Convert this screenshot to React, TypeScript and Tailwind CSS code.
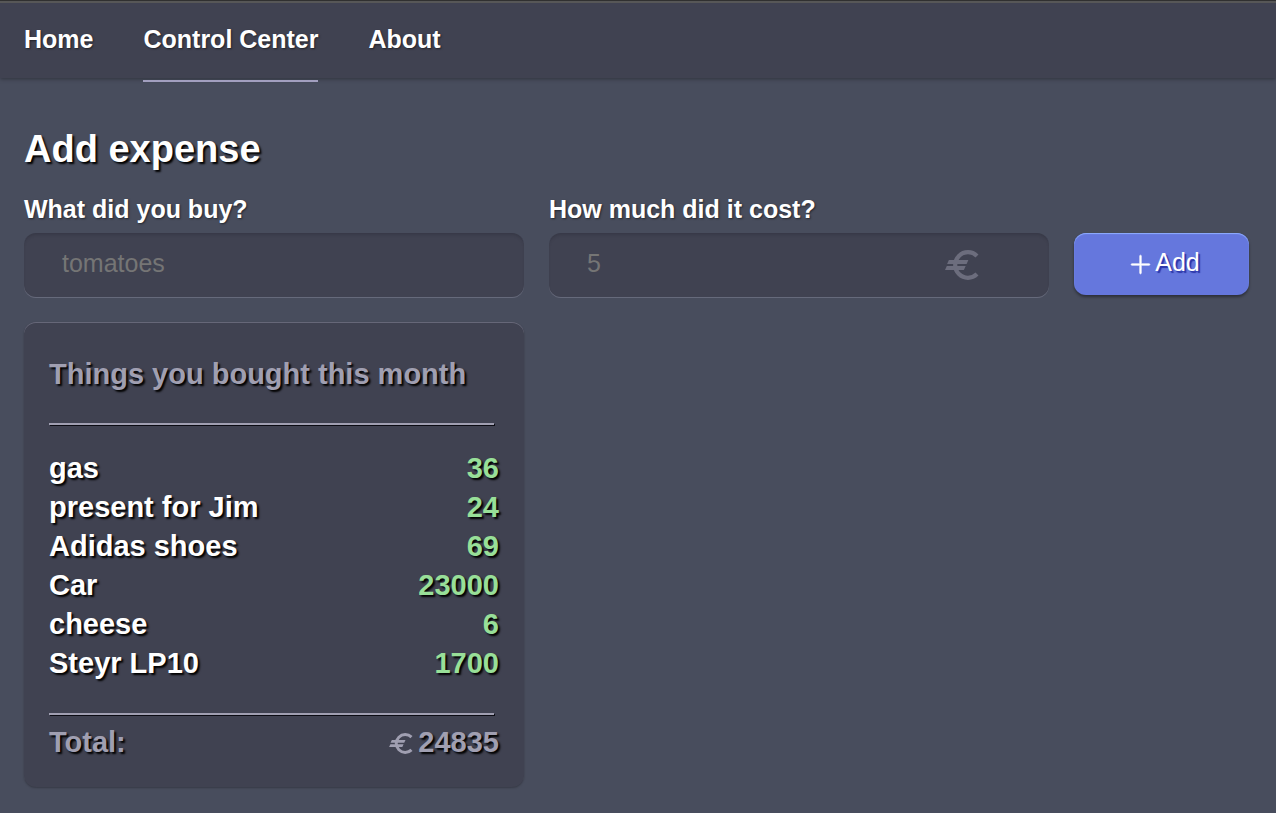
import { useState } from "react";
import { BsPlusLg } from "react-icons/bs";

type Expense = { name: string; cost: number };

const initialExpenses: Expense[] = [
  { name: "gas", cost: 36 },
  { name: "present for Jim", cost: 24 },
  { name: "Adidas shoes", cost: 69 },
  { name: "Car", cost: 23000 },
  { name: "cheese", cost: 6 },
  { name: "Steyr LP10", cost: 1700 },
];

const links = [
  { label: "Home", active: false },
  { label: "Control Center", active: true },
  { label: "About", active: false },
];

function EuroIcon({ className }: { className: string }) {
  return (
    <svg viewBox="0 0 34 30" className={className} aria-hidden="true">
      <path d="M32 5.9A12.8 12.8 0 1 0 32 24.1" fill="none" stroke="currentColor" strokeWidth="4.2" />
      <path d="M3.9 10H23.4L21.6 14H2.1ZM1.8 16H20.7L18.9 20H0Z" fill="currentColor" />
    </svg>
  );
}

const inputClass =
  "h-16 w-full min-w-0 rounded-xl bg-[#404251] px-[38px] pb-[3px] text-[25px] text-white placeholder:text-[#757575] shadow-[inset_0_3px_3px_-1px_rgba(30,30,45,0.25),0_1px_0_rgba(160,160,180,0.35)] focus:outline-none";

const labelClass =
  "mb-2 block text-[25px] leading-8 font-bold [text-shadow:1px_1px_2px_rgba(0,0,0,0.5)]";

function Divider() {
  return (
    <hr className="mr-[5px] border-0 border-t-2 border-[#a09fb1] shadow-[1px_1px_0_#0c0c14]" />
  );
}

export default function App() {
  const [expenses, setExpenses] = useState(initialExpenses);
  const [name, setName] = useState("");
  const [cost, setCost] = useState("");
  const total = expenses.reduce((sum, item) => sum + item.cost, 0);

  const add = () => {
    if (!name || !Number(cost)) return;
    setExpenses([...expenses, { name, cost: Number(cost) }]);
    setName("");
    setCost("");
  };

  return (
    <div className="min-h-screen bg-[#484d5d] font-['Liberation_Sans',Arial,sans-serif] text-white">
      <header className="border-t border-[#303030] bg-[#404251] shadow-[0_1px_4px_rgba(0,0,0,0.35)]">
        <nav className="flex h-[77px] gap-[50px] border-t-2 border-[#575757] px-6">
          {links.map((link) => (
            <a
              key={link.label}
              href="#"
              className={`h-[79px] shrink-0 pt-5 text-[25px] leading-8 font-bold [text-shadow:1px_1px_2px_rgba(0,0,0,0.5)] ${
                link.active ? "border-b-2 border-[#a29fbf]" : ""
              }`}
            >
              {link.label}
            </a>
          ))}
        </nav>
      </header>

      <main className="pt-[50px] pr-[27px] pb-[25px] pl-6">
        <h1 className="text-[38px] leading-[42px] font-bold [text-shadow:2px_2px_2px_#000000]">
          Add expense
        </h1>

        <form
          className="mt-[23px] grid grid-cols-[20fr_20fr_7fr] items-end gap-[25px]"
          onSubmit={(event) => {
            event.preventDefault();
            add();
          }}
        >
          <div>
            <label htmlFor="item" className={labelClass}>
              What did you buy?
            </label>
            <input
              id="item"
              placeholder="tomatoes"
              value={name}
              onChange={(event) => setName(event.target.value)}
              className={inputClass}
            />
          </div>
          <div>
            <label htmlFor="cost" className={labelClass}>
              How much did it cost?
            </label>
            <div className="relative">
              <input
                id="cost"
                inputMode="decimal"
                placeholder="5"
                value={cost}
                onChange={(event) => setCost(event.target.value)}
                className={inputClass}
              />
              <EuroIcon className="pointer-events-none absolute top-[17px] right-[70px] h-[30px] w-[34px] text-[#6c6d7d]" />
            </div>
          </div>
          <button
            type="submit"
            className="mb-0.5 flex h-[62px] items-center justify-center gap-0.5 rounded-xl bg-[#6577dd] pb-0.5 pl-[5px] text-[25px] shadow-[inset_0_1px_1px_#8fadff,0_2px_3px_rgba(0,0,0,0.4)] [text-shadow:2px_2px_1px_#2a35a8]"
          >
            <BsPlusLg className="mt-0.5 shrink-0" strokeWidth={0.4} aria-hidden="true" />
            Add
          </button>
        </form>

        <div className="mt-[25px] grid grid-cols-[20fr_20fr_7fr] gap-[25px]">
          <section className="rounded-xl bg-[#404251] px-[25px] pt-[33px] pb-[25px] text-[29px] leading-[39px] font-bold shadow-[inset_0_1px_0_rgba(160,160,180,0.4),0_1px_2px_rgba(0,0,0,0.25)] [text-shadow:2px_2px_2px_#000000]">
            <h2 className="mb-[29px] whitespace-nowrap text-[#a09fb1]">Things you bought this month</h2>
            <Divider />
            <ul className="mt-6 mb-[30px]">
              {expenses.map((item, index) => (
                <li key={index} className="flex justify-between">
                  <span>{item.name}</span>
                  <span className="text-[#98df98]">{item.cost}</span>
                </li>
              ))}
            </ul>
            <Divider />
            <div className="mt-2 flex justify-between text-[#a09fb1]">
              <span>Total:</span>
              <span className="flex items-center gap-[5px]">
                <EuroIcon className="mt-0.5 h-[21px] w-6" />
                {total}
              </span>
            </div>
          </section>
        </div>
      </main>
    </div>
  );
}
